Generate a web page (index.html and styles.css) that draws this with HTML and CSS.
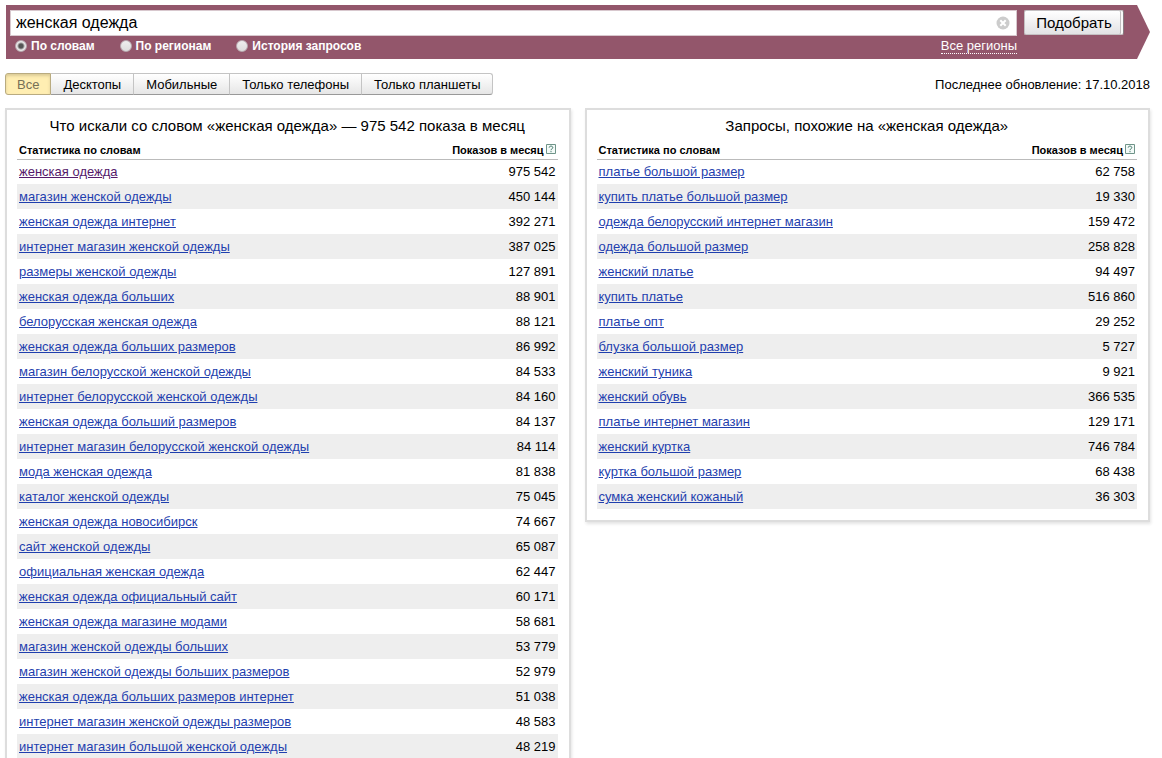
FILE: index.html
```html
<!DOCTYPE html>
<html lang="ru">
<head>
<meta charset="utf-8">
<title>Подбор слов</title>
<link rel="stylesheet" href="styles.css">
</head>
<body>
<form class="search" onsubmit="return false">
  <div class="search-main">
    <div class="search-row">
      <div class="search-box">
        <input class="search-input" type="text" value="женская одежда" aria-label="Запрос">
        <button class="clear" type="button" aria-label="Очистить"><svg width="14" height="14" viewBox="0 0 14 14"><circle cx="7" cy="7" r="6.5" fill="#ccc"/><path d="M4.3 4.3l5.4 5.4M9.7 4.3l-5.4 5.4" stroke="#fff" stroke-width="2"/></svg></button>
      </div>
      <button class="submit" type="submit">Подобрать</button>
    </div>
    <div class="search-options">
      <div class="modes">
        <label class="mode"><input class="radio" type="radio" name="mode" checked>По словам</label>
        <label class="mode"><input class="radio" type="radio" name="mode">По регионам</label>
        <label class="mode"><input class="radio" type="radio" name="mode">История запросов</label>
      </div>
      <a class="regions" href="#">Все регионы</a>
    </div>
  </div>
</form>
<div class="toolbar">
  <div class="tabs">
    <button class="tab tab-active" type="button">Все</button>
    <button class="tab" type="button">Десктопы</button>
    <button class="tab" type="button">Мобильные</button>
    <button class="tab" type="button">Только телефоны</button>
    <button class="tab" type="button">Только планшеты</button>
  </div>
  <div class="updated">Последнее обновление: 17.10.2018</div>
</div>
<main class="panels">
  <section class="panel">
    <h2 class="title">Что искали со словом «женская одежда» — 975 542 показа в месяц</h2>
    <table class="stats">
      <thead><tr><th>Статистика по словам</th><th class="num">Показов в месяц<a class="help" href="#" aria-label="Справка"><svg width="10" height="10" viewBox="0 0 10 10"><path d="M.5.5h9v9h-9z" fill="#f4faf8" stroke="#6f9489"/><path d="M3.2 3.6c0-2 3.6-2 3.6 0 0 1.2-1.8 1.2-1.8 2.6M5 7.1v1.1" fill="none" stroke="#3d7466"/></svg></a></th></tr></thead>
      <tbody>
        <tr><td><a class="visited" href="#">женская одежда</a></td><td class="num">975 542</td></tr>
        <tr><td><a href="#">магазин женской одежды</a></td><td class="num">450 144</td></tr>
        <tr><td><a href="#">женская одежда интернет</a></td><td class="num">392 271</td></tr>
        <tr><td><a href="#">интернет магазин женской одежды</a></td><td class="num">387 025</td></tr>
        <tr><td><a href="#">размеры женской одежды</a></td><td class="num">127 891</td></tr>
        <tr><td><a href="#">женская одежда больших</a></td><td class="num">88 901</td></tr>
        <tr><td><a href="#">белорусская женская одежда</a></td><td class="num">88 121</td></tr>
        <tr><td><a href="#">женская одежда больших размеров</a></td><td class="num">86 992</td></tr>
        <tr><td><a href="#">магазин белорусской женской одежды</a></td><td class="num">84 533</td></tr>
        <tr><td><a href="#">интернет белорусской женской одежды</a></td><td class="num">84 160</td></tr>
        <tr><td><a href="#">женская одежда больший размеров</a></td><td class="num">84 137</td></tr>
        <tr><td><a href="#">интернет магазин белорусской женской одежды</a></td><td class="num">84 114</td></tr>
        <tr><td><a href="#">мода женская одежда</a></td><td class="num">81 838</td></tr>
        <tr><td><a href="#">каталог женской одежды</a></td><td class="num">75 045</td></tr>
        <tr><td><a href="#">женская одежда новосибирск</a></td><td class="num">74 667</td></tr>
        <tr><td><a href="#">сайт женской одежды</a></td><td class="num">65 087</td></tr>
        <tr><td><a href="#">официальная женская одежда</a></td><td class="num">62 447</td></tr>
        <tr><td><a href="#">женская одежда официальный сайт</a></td><td class="num">60 171</td></tr>
        <tr><td><a href="#">женская одежда магазине модами</a></td><td class="num">58 681</td></tr>
        <tr><td><a href="#">магазин женской одежды больших</a></td><td class="num">53 779</td></tr>
        <tr><td><a href="#">магазин женской одежды больших размеров</a></td><td class="num">52 979</td></tr>
        <tr><td><a href="#">женская одежда больших размеров интернет</a></td><td class="num">51 038</td></tr>
        <tr><td><a href="#">интернет магазин женской одежды размеров</a></td><td class="num">48 583</td></tr>
        <tr><td><a href="#">интернет магазин большой женской одежды</a></td><td class="num">48 219</td></tr>
      </tbody>
    </table>
  </section>
  <section class="panel">
    <h2 class="title">Запросы, похожие на «женская одежда»</h2>
    <table class="stats">
      <thead><tr><th>Статистика по словам</th><th class="num">Показов в месяц<a class="help" href="#" aria-label="Справка"><svg width="10" height="10" viewBox="0 0 10 10"><path d="M.5.5h9v9h-9z" fill="#f4faf8" stroke="#6f9489"/><path d="M3.2 3.6c0-2 3.6-2 3.6 0 0 1.2-1.8 1.2-1.8 2.6M5 7.1v1.1" fill="none" stroke="#3d7466"/></svg></a></th></tr></thead>
      <tbody>
        <tr><td><a href="#">платье большой размер</a></td><td class="num">62 758</td></tr>
        <tr><td><a href="#">купить платье большой размер</a></td><td class="num">19 330</td></tr>
        <tr><td><a href="#">одежда белорусский интернет магазин</a></td><td class="num">159 472</td></tr>
        <tr><td><a href="#">одежда большой размер</a></td><td class="num">258 828</td></tr>
        <tr><td><a href="#">женский платье</a></td><td class="num">94 497</td></tr>
        <tr><td><a href="#">купить платье</a></td><td class="num">516 860</td></tr>
        <tr><td><a href="#">платье опт</a></td><td class="num">29 252</td></tr>
        <tr><td><a href="#">блузка большой размер</a></td><td class="num">5 727</td></tr>
        <tr><td><a href="#">женский туника</a></td><td class="num">9 921</td></tr>
        <tr><td><a href="#">женский обувь</a></td><td class="num">366 535</td></tr>
        <tr><td><a href="#">платье интернет магазин</a></td><td class="num">129 171</td></tr>
        <tr><td><a href="#">женский куртка</a></td><td class="num">746 784</td></tr>
        <tr><td><a href="#">куртка большой размер</a></td><td class="num">68 438</td></tr>
        <tr><td><a href="#">сумка женский кожаный</a></td><td class="num">36 303</td></tr>
      </tbody>
    </table>
  </section>
</main>
</body>
</html>
```
FILE: styles.css
```css
* { box-sizing: border-box; }
body {
  margin: 0;
  padding: 5px 12px 0 5px;
  background: #fff;
  color: #000;
  font: 13px/15px "Liberation Sans", Arial, sans-serif;
}
button, input { font: inherit; color: inherit; margin: 0; }

.search {
  margin-left: 1px;
  padding: 5px 26px 0 4px;
  height: 54px;
  background: #93566b;
  clip-path: polygon(0 0, calc(100% - 13px) 0, 100% 50%, calc(100% - 13px) 100%, 0 100%);
}
.search-row { display: flex; gap: 7px; }
.search-box {
  flex: 1;
  display: flex;
  align-items: center;
  height: 26px;
  padding-right: 6px;
  background: #fff;
  border: 1px solid #d8c8ce;
}
.search-input {
  flex: 1;
  height: 24px;
  padding: 0 5px;
  border: 0;
  outline: 0;
  background: none;
  font-size: 16px;
}
.clear { display: flex; padding: 0; border: 0; background: none; }
.submit {
  width: 100px;
  height: 25px;
  padding: 0;
  border: 1px solid #c4c0c2;
  border-right-color: #877c81;
  border-radius: 2px;
  background: linear-gradient(#fff, #e2e2e4);
  box-shadow: inset -2px 0 #f8f8f8, inset -3px 0 #c0bcbe;
  font-size: 15px;
}
.search-options {
  display: flex;
  justify-content: space-between;
  padding: 2px 107px 0 5px;
  color: #fff;
}
.modes { display: flex; gap: 25px; }
.mode { display: flex; align-items: center; gap: 4px; font-size: 12px; font-weight: bold; }
.radio {
  appearance: none;
  width: 12px;
  height: 12px;
  border: 1px solid #b9a9b0;
  border-radius: 50%;
  background: linear-gradient(#eee, #ddd);
}
.radio:checked { background: radial-gradient(circle, #555 0 2px, #e8e8e8 4px); }
.regions { color: #fff; text-decoration: none; border-bottom: 1px dotted #fff; }

.toolbar {
  display: flex;
  justify-content: space-between;
  align-items: center;
  margin: 14px 0 13px;
}
.tabs { display: flex; }
.tab {
  height: 22px;
  padding: 0 12px;
  border: 1px solid #c4c4c4;
  border-left-width: 0;
  border-bottom-color: #999;
  background: linear-gradient(#fff, #e6e6e6);
}
.tab:first-child { padding: 0 11px; border-left-width: 1px; border-radius: 3px 0 0 3px; }
.tab:last-child { border-radius: 0 3px 3px 0; }
.tab-active {
  background: #ffeeb2;
  border-color: #b9ab80;
  box-shadow: inset 0 2px 3px #dccb96;
  color: #777056;
}

.panels {
  display: grid;
  grid-template-columns: 1fr 1fr;
  gap: 14px;
  align-items: start;
}
.panel {
  padding: 7px 11px 11px 10px;
  border: 2px solid #ddd;
  box-shadow: 1px 2px 3px #e4e4e4;
}
.title {
  margin: 0 0 7px;
  font-size: 15px;
  line-height: 18px;
  font-weight: normal;
  text-align: center;
}
.stats { width: 100%; border-collapse: collapse; }
.stats th {
  height: 17px;
  padding: 0 2px;
  border-bottom: 1px solid #bbb;
  font-size: 11px;
  line-height: 16px;
  text-align: left;
}
.stats td { height: 25px; padding: 0 2px; }
.stats .num { text-align: right; white-space: nowrap; }
.stats tbody tr:nth-child(even) { background: #eee; }
.stats a { color: #1f3fae; }
.stats .visited { color: #551a6b; }
.help { margin-left: 2px; }
```
